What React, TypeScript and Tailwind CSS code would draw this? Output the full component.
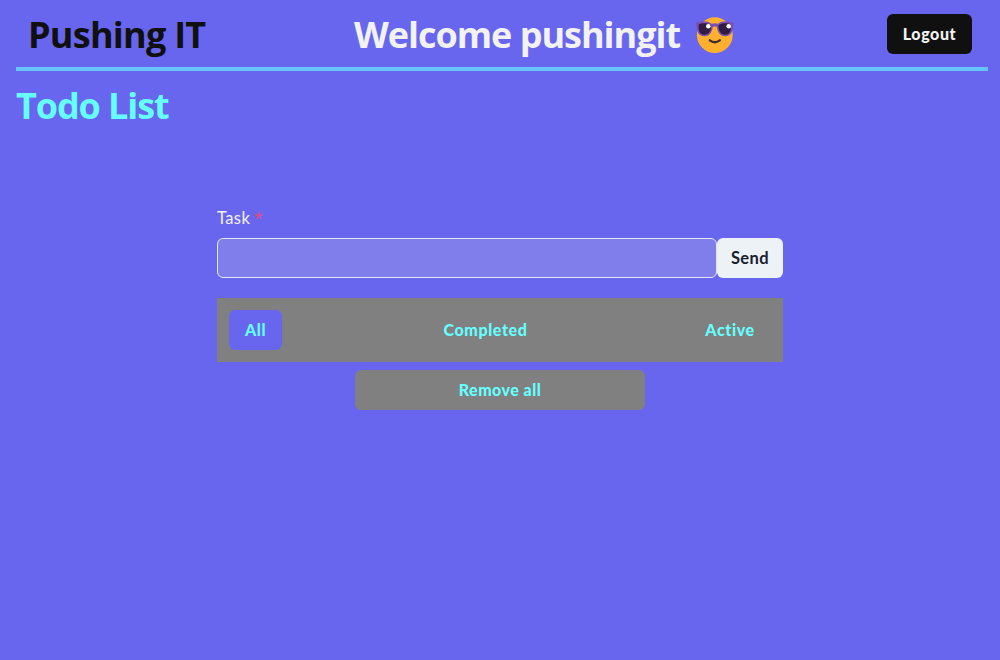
import { useState } from 'react';

function CoolFace() {
  return (
    <svg viewBox="0 0 40 40" className="h-10 w-10 shrink-0" aria-hidden="true">
      <circle cx="19.8" cy="20.2" r="17.9" fill="#ffb02e" />
      <path d="M14.800 25.300q5 3.800 10 0" fill="none" stroke="#402a32" strokeWidth="2.300" strokeLinecap="round" />
      <path d="M1.500 7.800C4 5.800 13.500 5.200 16.500 8.800q3.300-.9 6.600 0C26.100 5.200 35.600 5.800 38.100 7.800c1 1 .8 2.300-.1 3C38.200 17.500 35 21.300 30.500 21.300 25.500 21.300 22.600 18 21.800 11.800q-2-.8-4 0C17 18 14.100 21.300 9.100 21.300 4.600 21.300 1.400 17.500 1.600 10.800.7 10.100.5 8.800 1.500 7.800Z" fill="#7d4fb0" />
      <path d="M3.700 9.500c3-1.700 9.600-1.500 12.300.7.500 5.500-2.200 9.500-6.700 9.500-4.500 0-6.300-4.200-5.600-10.200Z" fill="#321b41" />
      <path d="M35.900 9.500c-3-1.700-9.600-1.500-12.300.7-.5 5.500 2.200 9.500 6.700 9.500 4.500 0 6.300-4.200 5.600-10.200Z" fill="#321b41" />
      <circle cx="13.300" cy="11.300" r="2.300" fill="#fff" />
      <circle cx="33.700" cy="11.300" r="2.300" fill="#fff" />
    </svg>
  );
}

const filters = [
  { name: 'All', width: 'w-[53px]' },
  { name: 'Completed', width: 'w-[116px]' },
  { name: 'Active', width: 'w-[82px]' },
];

export default function App() {
  const [active, setActive] = useState('All');
  const [task, setTask] = useState('');

  return (
    <div className="min-h-screen bg-[#6866ee] pl-4 pr-3 font-['Lato',sans-serif] text-base tracking-[0.6px] text-[#f2f2f2]">
      <header className="flex h-[71px] items-start border-b-4 border-[#66c4f8] pr-4 pl-3">
        <h1 className="mt-2 w-[326px] font-['Open_Sans',sans-serif] text-[36px] leading-[54px] font-bold tracking-[-0.75px] whitespace-nowrap text-[#101010]">
          Pushing IT
        </h1>
        <div className="mt-2 flex items-center">
          <h2 className="w-[341px] font-['Open_Sans',sans-serif] text-[36px] leading-[54px] font-bold tracking-[-1.02px] whitespace-nowrap">
            Welcome pushingit
          </h2>
          <CoolFace />
        </div>
        <button className="mt-3.5 ml-auto h-10 w-[85px] rounded-md bg-[#101010] pb-px font-black whitespace-nowrap">
          Logout
        </button>
      </header>
      <h2 className="mt-2 font-['Open_Sans',sans-serif] text-[36px] leading-[54px] font-bold tracking-[-1.1px] text-[#66ffff]">
        Todo List
      </h2>
      <main className="mt-[73px] ml-[201px] flex w-[566px] flex-col">
        <label htmlFor="task" className="flex h-6 text-[16.5px] leading-6 tracking-[0.4px]">
          Task
          <span className="ml-1 pt-px font-['Liberation_Sans',sans-serif] text-[21px] leading-6 text-[#e04c80]">*</span>
        </label>
        <div className="mt-2 flex h-10">
          <input
            id="task"
            value={task}
            onChange={(event) => setTask(event.target.value)}
            className="min-w-0 flex-1 rounded-md border border-[#e2e8f0] bg-[#807eea] px-4 outline-none"
          />
          <button className="w-[66px] rounded-md bg-[#edf2f7] text-[16.5px] font-bold tracking-[0.4px] text-[#1a202c]">Send</button>
        </div>
        <nav className="mt-5 flex h-16 items-center justify-between bg-[#808080] px-3">
          {filters.map(({ name, width }) => (
            <button
              key={name}
              onClick={() => setActive(name)}
              className={`h-10 rounded-md font-black text-[#66ffff] ${width} ${active === name ? 'bg-[#6866ee]' : ''}`}
            >
              {name}
            </button>
          ))}
        </nav>
        <button className="mt-2 h-10 w-[290px] self-center rounded-md bg-[#808080] font-black tracking-[0.45px] text-[#66ffff]">
          Remove all
        </button>
      </main>
    </div>
  );
}
